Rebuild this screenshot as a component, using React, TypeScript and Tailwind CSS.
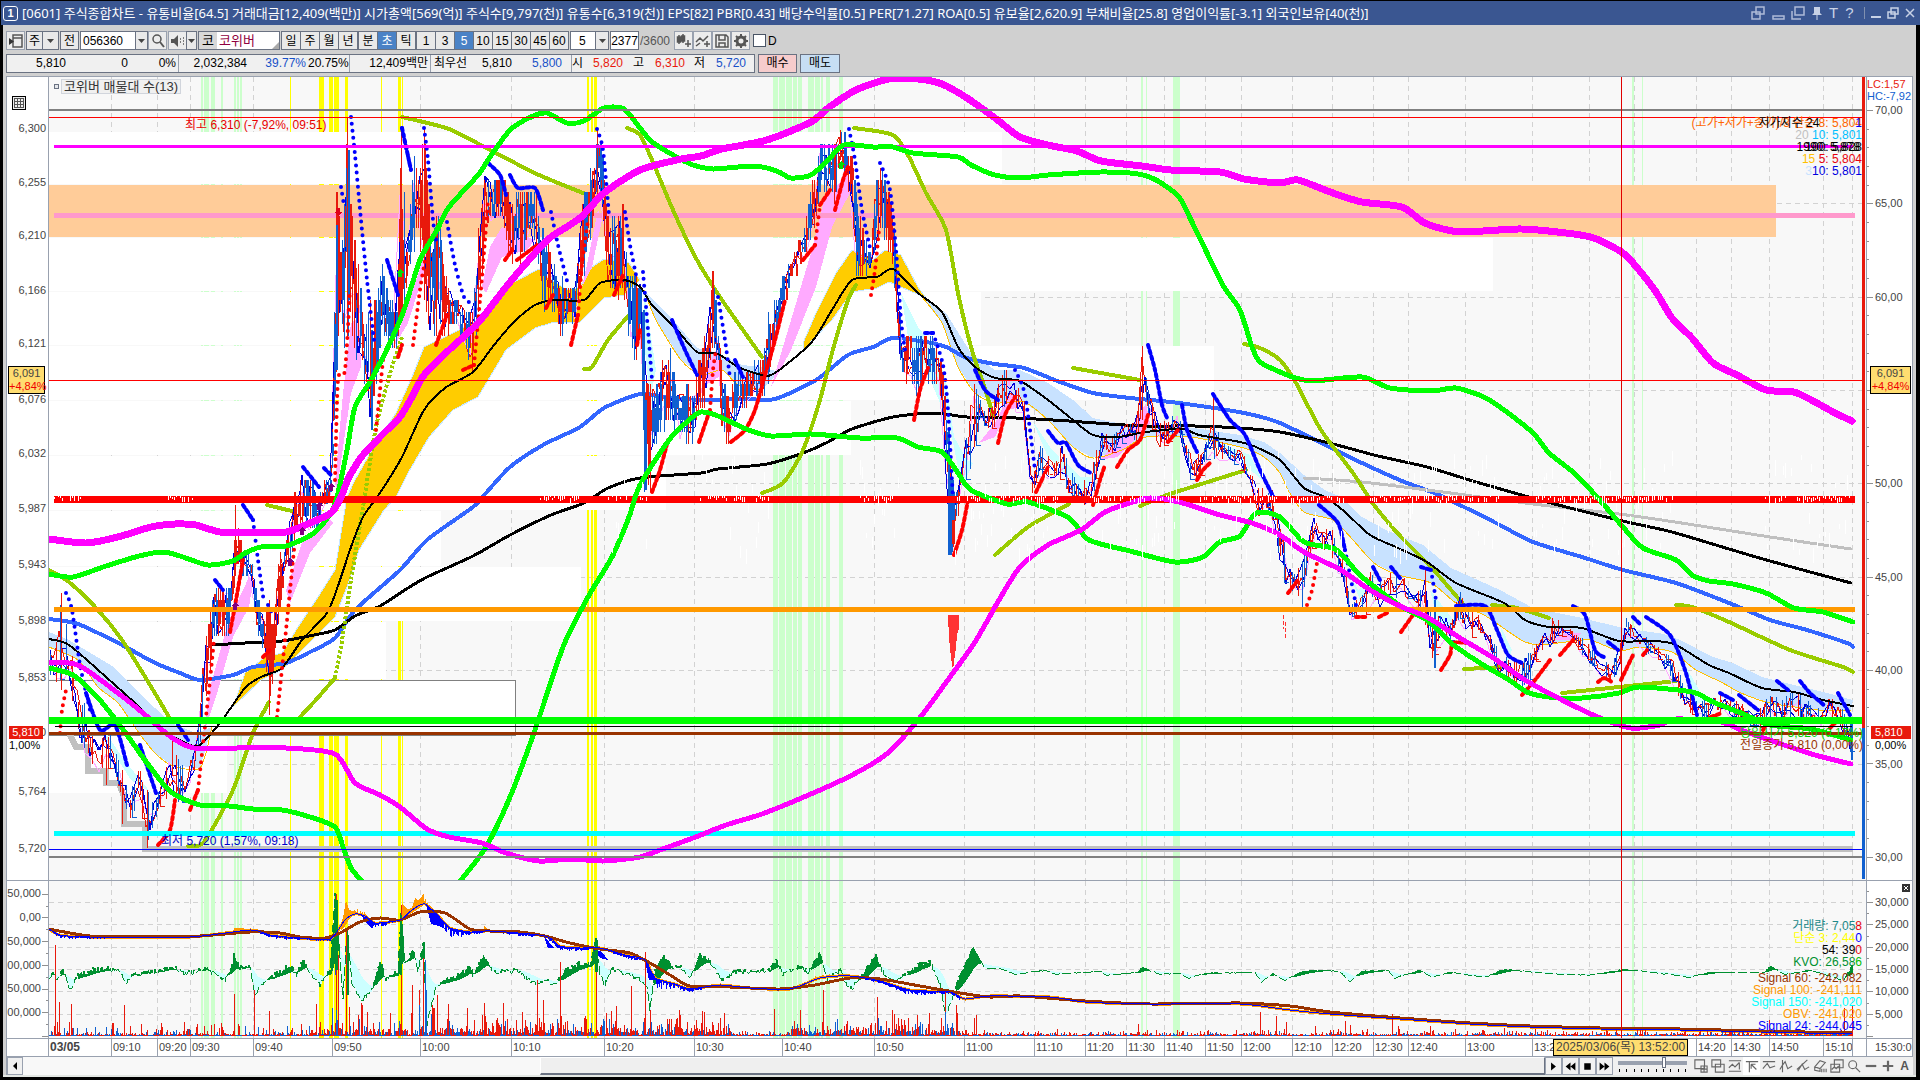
import React from "react";

type Pt = [number, number];

const X0 = 49;
const X1 = 1866;
const PLOT_W = X1 - X0;

/* ---------- helpers ---------- */

const parse = (s: string): Pt[] =>
  s
    .trim()
    .split(/\s+/)
    .map((p) => p.split(",").map(Number) as Pt);

const smooth = (s: string): string => {
  const p = parse(s);
  let d = `M${p[0][0]} ${p[0][1]}`;
  for (let i = 0; i < p.length - 1; i++) {
    const a = p[Math.max(0, i - 1)];
    const b = p[i];
    const c = p[i + 1];
    const e = p[Math.min(p.length - 1, i + 2)];
    const f = (n: number) => n.toFixed(1);
    d += `C${f(b[0] + (c[0] - a[0]) / 8)} ${f(b[1] + (c[1] - a[1]) / 8)} ${f(c[0] - (e[0] - b[0]) / 8)} ${f(c[1] - (e[1] - b[1]) / 8)} ${c[0]} ${c[1]}`;
  }
  return d;
};

const makeRandom = (seed: number) => () => {
  seed = (seed * 1664525 + 1013904223) % 4294967296;
  return seed / 4294967296;
};

const valueAt = (pts: number[][], x: number, k: number): number => {
  for (let i = 0; i < pts.length - 1; i++) {
    if (x <= pts[i + 1][0]) {
      const t = (x - pts[i][0]) / (pts[i + 1][0] - pts[i][0]);
      return pts[i][k] + (pts[i + 1][k] - pts[i][k]) * Math.max(0, t);
    }
  }
  return pts[pts.length - 1][k];
};

/* ---------- shared data ---------- */

const GRID_X = [111, 157, 190, 253, 332, 420, 511, 604, 694, 782, 874, 964, 1034, 1085, 1126, 1164, 1205, 1241, 1292, 1332, 1373, 1408, 1465, 1532, 1589, 1634, 1696, 1731, 1769, 1823, 1852];

const YELLOW: Pt[] = [[290, 1], [319, 5], [329, 4], [334, 5], [345, 3], [381, 1], [398, 3], [402, 1], [587, 2], [591, 2], [594, 3]];
const GREEN: Pt[] = [[201, 2], [204, 5], [211, 4], [221, 2], [234, 2], [237, 2], [240, 2], [773, 5], [779, 6], [786, 6], [793, 4], [798, 4], [808, 6], [815, 5], [821, 2], [826, 4], [839, 4], [1141, 2], [1146, 1], [1173, 7], [1632, 2], [1642, 1]];

const TIMES: [number, string][] = [
  [49, "03/05"], [111, "09:10"], [157, "09:20"], [190, "09:30"], [253, "09:40"], [332, "09:50"], [420, "10:00"], [511, "10:10"], [604, "10:20"], [694, "10:30"], [782, "10:40"], [874, "10:50"], [964, "11:00"], [1034, "11:10"], [1085, "11:20"], [1126, "11:30"], [1164, "11:40"], [1205, "11:50"], [1241, "12:00"], [1292, "12:10"], [1332, "12:20"], [1373, "12:30"], [1408, "12:40"], [1465, "13:00"], [1532, "13:20"], [1696, "14:20"], [1731, "14:30"], [1769, "14:50"], [1823, "15:10"], [1852, ""],
];

/* x, high, low of the traded price along the session */
const RANGE: number[][] = parse3(
  "49,645,682 57,640,690 61,593,690 69,630,680 78,690,745 88,710,760 98,745,772 106,720,770 114,745,770 122,770,800 130,790,822 139,765,800 147,790,848 155,800,818 163,775,808 171,735,790 180,765,810 190,760,780 196,735,775 200,690,750 206,632,700 212,590,650 220,582,643 228,582,635 233,575,600 235,505,570 241,545,568 249,555,570 258,590,640 265,610,660 269,600,700 273,625,690 278,560,630 285,545,570 290,505,565 297,488,530 302,467,530 310,480,530 318,490,530 325,480,500 331,468,500 333,380,440 336,187,372 340,225,330 345,190,370 347,117,340 350,200,330 355,240,360 363,310,370 370,300,430 376,300,395 382,260,335 388,300,345 396,310,345 401,130,330 407,240,280 413,150,260 418,170,235 424,130,300 430,240,345 437,210,340 445,260,340 453,300,320 461,300,330 467,310,360 472,310,370 478,215,320 482,190,280 485,165,240 490,175,225 500,175,225 510,190,260 520,190,260 530,190,250 536,190,260 543,235,310 550,240,310 555,270,310 561,280,345 567,285,320 575,285,320 580,220,300 586,180,260 592,165,230 597,129,190 602,155,210 608,200,290 615,210,300 622,205,290 628,275,340 634,270,365 640,270,340 644,310,490 650,380,490 656,375,440 664,360,430 670,345,420 677,380,440 685,385,440 693,390,440 699,350,415 706,330,400 713,260,350 718,320,380 722,370,440 728,400,442 736,370,430 744,375,410 752,365,395 762,360,395 768,310,395 775,300,340 782,280,310 788,262,285 795,250,270 802,225,260 808,200,260 814,170,240 820,140,200 828,140,190 834,140,205 840,130,155 846,140,190 852,160,200 857,200,290 863,235,270 870,250,275 876,180,250 881,160,225 887,190,250 892,200,260 897,270,330 902,340,380 910,340,380 917,340,400 925,330,380 932,330,390 938,355,380 943,370,410 948,430,555 953,480,555 958,480,520 963,460,500 968,400,480 972,375,470 980,400,420 987,410,430 993,395,430 1003,370,410 1010,370,400 1018,385,415 1024,400,430 1032,480,495 1040,445,470 1048,455,490 1056,460,480 1062,440,480 1070,470,500 1080,485,505 1090,470,505 1097,440,480 1102,430,450 1110,435,455 1118,430,450 1124,420,440 1137,420,440 1142,346,420 1147,385,410 1153,400,440 1160,420,450 1170,420,440 1178,405,430 1184,440,455 1190,450,480 1200,455,475 1205,445,460 1213,410,460 1220,440,460 1230,445,460 1240,445,470 1250,470,480 1258,480,520 1264,490,518 1273,490,520 1282,520,580 1286,560,593 1295,570,590 1302,560,610 1308,540,560 1315,505,540 1322,530,550 1330,525,555 1338,545,575 1345,565,590 1350,600,618 1358,600,618 1365,590,618 1370,570,600 1380,580,610 1390,570,595 1400,570,600 1410,590,600 1420,590,610 1425,570,630 1432,620,660 1440,610,640 1450,620,640 1460,590,620 1470,610,640 1478,615,630 1490,630,650 1500,650,680 1510,660,680 1520,660,690 1530,650,680 1540,640,650 1550,615,650 1558,620,640 1565,625,635 1575,632,645 1585,640,660 1595,650,670 1603,660,680 1612,660,682 1620,640,670 1626,617,640 1635,625,640 1645,635,655 1655,645,655 1665,650,670 1675,660,690 1685,690,710 1695,700,716 1705,700,718 1715,695,715 1725,695,710 1735,700,725 1745,705,720 1755,715,730 1765,700,725 1772,693,715 1780,700,730 1790,690,720 1800,690,725 1810,700,730 1820,710,725 1830,695,715 1840,705,730 1848,720,745 1852,725,760"
);

function parse3(s: string): number[][] {
  return s.split(" ").map((p) => p.split(",").map(Number));
}

/* ---------- price curves ---------- */

const MAGENTA_HIGH = "49,539 86,543 118,537 151,527 175,524 196,525 220,532 253,532 286,532 310,523 331,513 341,497 349,477 363,455 384,433 400,417 412,397 424,375 449,350 478,323 506,287 535,253 551,237 580,218 604,193 640,170 681,159 701,156 722,149 767,140 811,122 828,108 856,90 889,79 918,79 942,84 967,98 995,118 1020,137 1048,145 1077,151 1101,161 1142,166 1171,170 1220,172 1244,179 1280,183 1298,180 1333,193 1362,202 1402,207 1423,222 1443,229 1464,232 1521,229 1566,233 1594,238 1623,253 1639,270 1656,292 1672,318 1692,338 1713,363 1737,375 1766,390 1794,392 1815,402 1835,413 1852,421";
const MAGENTA_LOW = "49,662 78,665 114,690 143,713 171,737 194,748 237,748 286,748 335,754 355,783 380,795 400,807 427,829 449,837 482,843 506,853 539,861 571,859 604,861 640,857 660,850 693,838 726,825 762,814 811,794 856,773 889,752 922,715 950,677 975,642 999,600 1020,567 1048,545 1081,530 1105,512 1130,503 1150,498 1179,502 1220,515 1252,523 1280,535 1304,552 1341,570 1370,590 1402,607 1427,617 1460,638 1492,657 1525,680 1566,702 1598,717 1631,728 1660,725 1676,719 1721,722 1741,730 1778,743 1815,755 1851,764";
const GREEN_HIGH = "49,574 73,577 106,566 139,556 163,552 180,556 208,565 233,561 245,553 261,547 286,546 314,533 331,513 337,497 347,450 355,407 371,380 388,347 404,310 420,260 437,230 449,207 478,175 490,157 510,130 531,117 547,113 567,123 584,121 604,108 624,109 640,128 652,142 673,155 693,165 713,169 738,167 762,167 779,172 791,178 811,175 828,160 844,145 873,147 893,147 913,153 958,157 971,165 995,175 1020,178 1048,175 1101,172 1138,174 1158,181 1179,197 1191,220 1207,253 1224,287 1240,310 1252,347 1260,362 1280,372 1296,378 1313,381 1362,377 1390,388 1431,391 1456,388 1484,397 1504,410 1533,433 1549,453 1574,473 1598,498 1623,527 1643,548 1676,560 1692,575 1709,581 1733,584 1766,593 1794,608 1823,612 1853,622";
const GREEN_LOW_A = "49,668 73,675 98,698 122,728 147,763 171,792 200,805 229,806 253,809 282,810 310,817 335,827 343,847 351,868 361,880";
const GREEN_LOW_B = "461,880 486,847 510,797 535,730 563,647 588,597 612,557 629,517 640,485 669,440 689,420 701,412 718,416 746,429 771,436 811,434 860,438 897,438 918,447 942,452 958,473 971,490 1007,504 1028,502 1069,518 1089,540 1130,551 1175,562 1203,557 1220,542 1240,536 1256,513 1280,517 1304,542 1333,548 1345,558 1362,577 1402,607 1427,620 1451,643 1480,663 1509,680 1529,693 1558,698 1582,698 1619,693 1639,687 1692,692 1713,702 1741,713 1770,725 1811,729 1851,740";
const BLUE_LINE = "49,619 78,624 122,645 155,663 180,673 200,680 233,675 253,667 286,663 310,652 335,638 355,610 400,570 427,540 473,507 486,493 510,467 543,445 580,427 604,408 640,394 664,397 701,400 746,399 775,399 816,380 848,355 873,347 893,338 926,342 946,347 967,358 995,364 1024,368 1060,382 1093,393 1130,398 1179,403 1244,413 1280,423 1329,447 1362,463 1402,481 1439,495 1496,523 1533,542 1582,557 1623,570 1676,583 1729,603 1770,620 1807,630 1847,643 1853,647";
const BLACK_LONG = "212,645 245,643 282,641 314,635 335,630 355,616 380,606 408,588 427,577 473,556 510,535 551,515 584,503 608,488 640,478 701,473 718,469 767,464 803,453 828,442 852,429 893,417 934,413 967,417 1016,418 1069,421 1109,424 1146,426 1195,426 1240,428 1280,432 1329,443 1378,456 1427,467 1476,482 1525,496 1574,509 1627,522 1672,532 1729,549 1770,561 1851,583";
const BLACK_SHORT = "49,639 69,645 106,677 135,703 163,730 180,740 198,746 220,723 245,688 261,677 282,668 302,640 327,613 339,583 351,547 363,517 380,493 402,457 424,410 445,388 473,372 494,345 514,322 535,305 555,300 584,300 600,283 624,280 640,287 652,305 677,330 697,352 718,354 738,367 762,375 775,373 811,343 832,310 852,280 877,277 893,269 918,293 942,312 958,347 975,367 995,378 1020,381 1048,400 1073,420 1093,435 1118,437 1146,432 1183,429 1199,435 1240,442 1256,447 1280,460 1304,488 1325,497 1345,512 1370,535 1398,548 1427,562 1456,583 1504,603 1525,620 1549,627 1582,628 1619,641 1656,641 1676,645 1709,665 1729,673 1762,688 1794,692 1823,700 1853,706";
const GRAY_LINE = "1304,478 1362,482 1443,492 1533,504 1619,514 1688,524 1770,537 1851,549";

const OLIVE = [
  "49,570 69,582 98,610 122,640 147,680 169,717",
  "188,846 204,842 233,790 253,733 269,702",
  "267,505 292,511",
  "300,717 314,702 335,678",
  "402,117 449,129 490,150 539,175 588,195",
  "584,369 592,367 608,340 629,315",
  "627,128 640,135 652,160 673,210 697,260 722,300 762,357",
  "762,493 783,483 803,450 820,400 832,353 848,300 856,285",
  "854,128 893,135 909,157 926,193 946,230 958,293 971,347 983,383 993,415",
  "1073,368 1140,380",
  "995,555 1028,527 1069,504",
  "1140,506 1167,495 1211,481 1246,470",
  "1244,344 1260,348 1280,360 1296,383 1321,430 1353,473 1374,505 1402,538 1431,567 1464,605",
  "1492,605 1517,608 1549,618",
  "1464,669 1504,667",
  "1562,693 1676,681",
  "1676,605 1692,607 1729,622 1790,650 1843,667 1853,672",
];
const OLIVE_DOTTED = "335,678 341,647 351,580 363,507 376,427 392,367 402,337";

const GOLD_AREAS = [
  "233,707 245,673 265,657 282,653 298,627 318,597 335,570 347,497 355,480 376,443 396,413 412,377 424,347 453,333 473,323 494,303 514,282 539,269 547,277 567,290 580,287 592,267 604,259 629,263 640,280 624,295 604,298 580,322 551,323 535,328 506,350 478,397 453,410 429,437 408,473 396,497 384,510 359,550 347,587 335,617 302,650 282,670 261,680",
  "803,343 816,313 836,273 852,250 873,260 885,250 901,255 918,287 926,298 901,287 889,282 877,288 852,292 832,320 803,350",
];
const BAND_LOW = "1851,710 1819,710 1770,703 1741,693 1721,682 1696,670 1672,652 1639,647 1619,651 1590,640 1566,642 1541,645 1525,642 1509,632 1484,615 1456,603 1431,583 1398,575 1374,563 1353,540 1333,520 1304,512 1288,490 1280,473 1264,457 1244,448 1191,437 1146,437 1122,450 1093,458 1073,447 1048,420 1024,402 995,403 975,393 958,367 942,323 922,297";
const BLUE_AREAS = [
  "49,632 69,640 114,667 139,693 171,723 196,733 212,727 200,768 171,765 155,753 139,733 118,703 98,687 78,660 49,647",
  "644,290 673,320 697,348 718,353 742,365 762,367 779,372 762,390 738,385 722,370 701,375 681,360 656,320",
  "922,297 946,313 971,353 995,370 1020,370 1048,383 1073,400 1093,418 1122,424 1150,425 1187,427 1240,435 1264,442 1280,453 1304,475 1325,490 1341,497 1362,517 1386,530 1423,545 1451,568 1500,590 1533,608 1582,618 1623,628 1664,634 1680,640 1713,657 1733,663 1762,677 1794,685 1827,693 1853,700 " + BAND_LOW,
];
const GOLD_THIN = [BAND_LOW, "49,647 78,660 98,687 118,703 139,733 155,753 171,765 200,768 212,727", "644,290 656,320 681,360 701,375 722,370 738,385 762,390"];
const PINK_AREAS = [
  "204,733 210,687 229,620 249,577 253,580 249,607 233,637 216,697",
  "286,590 302,543 327,517 333,523 310,553 290,603",
  "335,483 343,393 351,323 359,317 361,367 351,393 343,447 337,490",
  "392,350 412,293 429,240 427,263 408,323",
  "482,287 490,247 502,227 535,240 527,250 502,257 486,293",
  "582,287 588,260 598,210 602,220 592,267",
  "771,387 791,320 811,253 824,200 848,173 850,193 832,227 816,287 791,350 775,380",
  "979,443 995,423 1011,393 1022,407 1007,410 995,437",
  "1099,460 1130,430 1146,403 1150,423 1118,457",
  "1553,640 1566,632 1582,633 1574,640",
  "700,380 716,350 722,375 706,385",
];
const CYAN_AREAS = [
  "82,687 102,727 122,757 151,793 131,780 110,747",
  "644,290 650,330 656,370 650,400 645,350",
  "901,293 918,327 934,347 946,380 954,437 967,460 973,463 962,487 950,427 922,360 909,343",
  "1032,420 1052,450 1081,477 1093,477 1085,493 1048,457",
  "1345,563 1358,590 1372,578 1362,605",
  "1430,590 1455,622 1440,630",
  "1500,625 1512,650 1508,662",
  "1685,665 1705,700 1695,705",
  "1213,440 1250,455 1262,480 1245,465",
];

const BLUE_DOTS = [
  "351,117 355,155 361,220 367,280 374,340", "341,187 344,205", "402,128 411,170", "424,128 428,160 433,220 436,240", "447,222 455,265 464,297 471,303",
  "551,212 558,245 568,285", "597,129 603,150 609,215", "625,212 630,245 636,275", "643,272 648,330 652,380", "718,297 725,340 730,378",
  "849,129 855,160 862,210 870,248", "880,163 890,190 896,250 901,320 905,350", "933,333 943,365 948,410 953,500", "1015,370 1025,395 1035,470",
  "66,593 72,610 80,665 90,710", "253,520 258,560 264,603", "268,605 274,617", "1345,550 1356,605", "1431,570 1436,600",
];
const BLUE_DASHES = [
  "402,128 411,170", "387,260 398,295", "488,163 500,175 506,195", "510,175 518,188 535,188 543,210", "672,320 685,350 697,375", "735,360 743,377", "925,333 933,333",
  "975,370 985,390 998,400", "1048,431 1058,443 1066,443 1078,465 1091,473", "1148,345 1155,370 1162,405 1168,420", "1182,405 1187,430 1197,452", "1213,394 1230,420 1245,435 1260,470 1275,500",
  "1319,505 1338,523 1345,550", "1373,567 1380,580", "1391,567 1400,578", "1421,567 1431,570", "1456,606 1485,606 1497,630 1508,655 1522,663", "1573,606 1585,615 1595,650 1606,658",
  "1608,642 1618,650", "1633,617 1641,625", "1646,617 1670,635 1685,670 1697,715", "1720,693 1733,700", "1739,695 1758,710", "1777,681 1788,690", "1800,681 1810,693 1825,706", "1838,693 1850,715",
  "86,693 100,730 115,725 127,765", "140,745 156,793", "178,725 188,740", "215,580 223,590", "243,505 253,520", "303,467 319,487", "324,468 331,475",
];
const RED_DOTS = [
  "60,733 62,710 66,690", "198,790 204,735 210,680 214,640", "277,717 285,640 292,570 295,540", "335,480 338,380 345,370 350,290", "376,430 383,360", "413,345 420,290 425,260",
  "474,365 480,300 485,240 488,200", "578,315 582,265 588,220", "710,410 713,370 716,350", "871,295 875,270 879,230", "815,245 820,205", "1307,605 1312,590 1317,563",
];
const RED_DASHES = [
  "158,845 170,830 175,800", "190,810 198,790", "230,632 236,600 243,560", "263,657 270,650", "398,357 402,345", "436,345 447,315", "463,370 474,365", "505,260 512,250", "517,260 537,245",
  "546,308 553,295", "571,345 578,315", "614,295 623,275", "637,345 640,330", "652,492 660,470 668,440", "699,442 710,410", "731,442 745,430 755,410 765,375 775,340 785,300",
  "803,260 815,245", "820,205 830,190", "835,210 843,180 848,167", "914,420 920,390 928,368", "954,555 962,530 968,500", "998,443 1005,415 1015,397", "1036,492 1048,467",
  "1093,505 1100,480 1105,465", "1117,467 1128,450 1140,440 1148,415", "1168,442 1178,430", "1197,480 1203,470 1211,462", "1288,593 1298,580", "1356,617 1366,617", "1379,617 1387,613",
  "1401,632 1413,615", "1441,670 1450,655 1453,643 1468,643", "1522,695 1535,680 1550,660", "1560,655 1573,640", "1598,682 1604,678 1612,682", "1621,680 1633,655", "1643,655 1647,650",
  "1711,717 1722,713", "1763,730 1770,720", "1830,728 1838,720",
];

/* volume-by-price rows: top, bottom, right end */
const PROFILE: [number, number, number][] = [
  [132, 184, 1002], [238, 291, 1493], [292, 345, 981], [346, 400, 1214], [401, 455, 851], [456, 510, 666], [511, 566, 441], [567, 621, 581], [622, 679, 386], [680, 735, 515], [736, 793, 227],
];

const Grid = ({ top, bottom, rows }: { top: number; bottom: number; rows: number[] }) => (
  <g>
    <g stroke="#d2d2d2" strokeDasharray="5 4">
      {rows.map((y) => (
        <line key={y} x1={X0} x2={1862} y1={y + 0.5} y2={y + 0.5} />
      ))}
      {GRID_X.map((x) => (
        <line key={x} x1={x + 0.5} x2={x + 0.5} y1={top} y2={bottom} />
      ))}
    </g>
    {YELLOW.map(([x, w]) => (
      <rect key={x} x={x} y={top} width={w} height={bottom - top} fill="#ffff00" />
    ))}
    {GREEN.map(([x, w]) => (
      <rect key={x} x={x} y={top} width={w} height={bottom - top} fill="#ccffcc" />
    ))}
  </g>
);

/* one price tick on the vertical scale */
const TICK = 12;
const snap = (y: number) => Math.round(y / TICK) * TICK;

const Candles = () => {
  const rnd = makeRandom(77);
  let red = "";
  let blue = "";
  let redThin = "";
  let blueThin = "";
  let up = true;
  for (let x = 50; x < 1853; x += 2) {
    const hi = valueAt(RANGE, x, 1);
    const lo = valueAt(RANGE, x, 2);
    const span = lo - hi;
    if (rnd() < 0.35) up = !up;
    const dense = x > 205 && x < 960;
    const len = span * (0.4 + rnd() * 0.6);
    const start = hi + (span - len) * rnd();
    if (dense) {
      const top = snap(start);
      const bottom = Math.max(top + TICK, snap(start + len));
      const seg = `M${x + 0.5} ${top}V${bottom}`;
      const bTop = top + Math.floor(rnd() * 2) * TICK;
      const bBottom = Math.max(bTop + TICK, snap(bTop + (bottom - bTop) * 0.7));
      const b = `M${x + 1} ${bTop}V${bBottom}`;
      if (up) {
        red += rnd() < 0.7 ? b : "";
        redThin += seg;
      } else {
        blue += rnd() < 0.7 ? b : "";
        blueThin += seg;
      }
    } else if (rnd() < 0.55) {
      const seg = `M${x + 0.5} ${start.toFixed(0)}V${(start + len).toFixed(0)}`;
      if (up) redThin += seg + (rnd() < 0.3 ? "h4" : "");
      else blueThin += seg + (rnd() < 0.3 ? "h4" : "");
    }
  }
  const path = (offset: number, step: number) => {
    let d = "";
    for (let x = 50; x < 1853; x += step) {
      const hi = valueAt(RANGE, x, 1);
      const lo = valueAt(RANGE, x, 2);
      const y = hi + (lo - hi) * (0.1 + 0.8 * rnd()) + offset;
      d += `${d ? "L" : "M"}${x} ${y.toFixed(0)}`;
    }
    return d;
  };
  return (
    <g fill="none">
      <path d={path(6, 7)} stroke="#ffaaff" />
      <path d={path(0, 4)} stroke="#0000d8" />
      <path d={path(0, 3)} stroke="#e8190c" />
      <path d={path(2, 5)} stroke="#0000d8" />
      <path d={blueThin} stroke="#1060d0" />
      <path d={redThin} stroke="#e8190c" />
      <path d={blue} stroke="#1060d0" strokeWidth={2} />
      <path d={red} stroke="#e8190c" strokeWidth={2} />
      <path d="M347.500 117V340M401.500 128V310M424.500 128V290M597.500 128V200M840.500 130V160M1142.500 350V420M61.500 593V690M269.500 600V715M235.500 505V570M1213.500 394V450M1425.500 570V625" stroke="#e8190c" />
      <path d="M348.500 150V300M336.500 225V370M643.500 310V430M645.500 400V490M948.500 430V555M950.500 480V555M371.500 330V430M1434.500 600V668M1851.500 720V760" stroke="#1060d0" strokeWidth={2} />
      <rect x={952} y={520} width={3} height={24} fill="#e8190c" />
      <path d="M147.500 790V848M106.500 745V785M122.500 770V824" stroke="#e8190c" />
    </g>
  );
};

const WhiteNoise = () => {
  const rnd = makeRandom(5);
  const onLine: string[] = [];
  const below: string[] = [];
  const clusters: Pt[] = [[54, 82], [168, 196], [540, 580], [608, 628], [640, 650], [700, 770], [860, 900], [955, 1060], [1090, 1180], [1200, 1280], [1285, 1345], [1370, 1500], [1530, 1675], [1765, 1850]];
  clusters.forEach(([a, b]) => {
    for (let x = a; x < b; x += 2) {
      if (rnd() < 0.6) {
        const y = 495 + Math.floor(rnd() * 4);
        onLine.push(`M${x + 0.5} ${y}v${2 + Math.floor(rnd() * 4)}`);
      }
      if (rnd() < 0.55 && a > 600) {
        const y = 450 + rnd() * 100;
        below.push(`M${x + 0.5} ${y.toFixed(0)}v${(4 + rnd() * 12).toFixed(0)}`);
      }
    }
  });
  return <path d={onLine.join("") + below.join("")} stroke="#ffffff" fill="none" />;
};

const Arrow = ({ x, y, color, down }: { x: number; y: number; color: string; down?: boolean }) => {
  const s = down ? -1 : 1;
  return <path d={`M${x} ${y - 4 * s}l4 ${4 * s}h-2v${4 * s}h-4v${-4 * s}h-2z`} fill={color} />;
};

const Curve = ({ d, color, w }: { d: string; color: string; w: number }) => (
  <path d={smooth(d)} stroke={color} strokeWidth={w} fill="none" strokeLinecap="round" strokeLinejoin="round" />
);

const PriceChart = () => (
  <svg viewBox={`${X0} 77 ${PLOT_W} 803`} preserveAspectRatio="none" shapeRendering="crispEdges" className="block h-[803px] w-full bg-[#f8f8f8]" role="img" aria-label="가격 차트">
    <Grid top={77} bottom={880} rows={[203, 297, 390, 483, 577, 670, 764]} />
    {PROFILE.map(([t, b, r]) => (
      <rect key={t} x={X0} y={t} width={r - X0} height={b - t} fill="#ffffff" />
    ))}
    <rect x={X0 - 1} y={680.5} width={467} height={55} fill="none" stroke="#808080" />
    <rect x={X0} y={185} width={1727} height={52} fill="#ffcc99" />
    {BLUE_AREAS.map((d) => <polygon key={d} points={d} fill="#c8e2ff" />)}
    {CYAN_AREAS.map((d) => <polygon key={d} points={d} fill="#ccffff" />)}
    {GOLD_AREAS.map((d) => <polygon key={d} points={d} fill="#ffcc00" stroke="#c8e8ff" />)}
    {PINK_AREAS.map((d) => <polygon key={d} points={d} fill="#ffaaff" />)}
    {GOLD_THIN.map((d) => <path key={d} d={smooth(d)} fill="none" stroke="#ffc000" />)}
    <path d="M69 733L76 747H88V771H106V783H119L124 797V824H145V849H1853" fill="none" stroke="#c0c0c0" strokeWidth={6} />
    <path d="M54 215H1855" stroke="#ff99cc" strokeWidth={5} />
    <Curve d={BLUE_LINE} color="#3366ff" w={4} />
    <Curve d={GRAY_LINE} color="#c0c0c0" w={3} />
    <Curve d={BLACK_LONG} color="#000000" w={3} />
    {OLIVE.map((d) => <Curve key={d} d={d} color="#99cc00" w={4} />)}
    <path d={smooth(OLIVE_DOTTED)} fill="none" stroke="#99cc00" strokeWidth={4} strokeDasharray="3 2" />
    <Candles />
    <Curve d={BLACK_SHORT} color="#000000" w={2} />
    <g shapeRendering="auto" fill="none" strokeLinecap="round" strokeWidth={4}>
      {BLUE_DOTS.map((d) => <path key={d} d={smooth(d)} stroke="#0000ff" strokeDasharray="0 7" />)}
      {RED_DOTS.map((d) => <path key={d} d={smooth(d)} stroke="#ff0000" strokeDasharray="0 7" />)}
      {BLUE_DASHES.map((d) => <path key={d} d={smooth(d)} stroke="#0000ff" strokeDasharray="3 3" />)}
      {RED_DASHES.map((d) => <path key={d} d={smooth(d)} stroke="#ff0000" strokeDasharray="3 3" />)}
    </g>
    <path d="M54 146.5H1853" stroke="#ff00ff" strokeWidth={3} />
    <path d="M54 499.500H1855" stroke="#ff0000" strokeWidth={7} />
    <path d="M54 609.500H1855" stroke="#ff9900" strokeWidth={5} />
    <path d="M54 833.500H1855" stroke="#00ffff" strokeWidth={5} />
    <Curve d={GREEN_HIGH} color="#00ff00" w={5} />
    <Curve d={GREEN_LOW_A} color="#00ff00" w={5} />
    <Curve d={GREEN_LOW_B} color="#00ff00" w={5} />
    <Curve d={MAGENTA_HIGH} color="#ff00ff" w={7} />
    <Curve d={MAGENTA_LOW} color="#ff00ff" w={5} />
    <WhiteNoise />
    <path d="M948 615h11v14l-2 6l-1 12l-3 23l-2-12l-2-20z" fill="#ff3333" />
    <path d="M1283.500 615v14M1285.500 622v18" stroke="#ff3333" strokeDasharray="4 2" />
    <Arrow x={338} y={212} color="#e0001a" down />
    <Arrow x={400} y={273} color="#00e000" />
    <Arrow x={841} y={165} color="#00e000" />
    {[[331, 487], [319, 506], [302, 531], [290, 562], [235, 606]].map(([x, y]) => (
      <Arrow key={x} x={x} y={y} color="#800080" />
    ))}
    <rect x={X0} y={717} width={1813} height={7} fill="#00ff00" />
    <rect x={55} y={726} width={1797} height={1} fill="#000000" />
    <rect x={X0} y={732} width={1813} height={3} fill="#993300" />
    <rect x={X0} y={849} width={1813} height={1} fill="#0000ff" />
    <rect x={X0} y={856} width={1813} height={2} fill="#808080" />
    <rect x={X0} y={109} width={1813} height={2} fill="#808080" />
    <rect x={X0} y={117} width={1813} height={1} fill="#ff0000" />
    <rect x={X0} y={380} width={1813} height={1} fill="#ff0000" />
    <rect x={1621} y={77} width={1} height={803} fill="#e00000" />
    <rect x={1862} y={77} width={3} height={651} fill="#e8190c" />
    <rect x={1862} y={728} width={3} height={151} fill="#1060d0" />
  </svg>
);

/* ---------- lower indicator pane ---------- */

const BROWN = "49,929 90,936 150,937 200,936 250,932 280,933 300,937 325,938 340,933 360,922 380,918 400,920 420,912 445,913 470,929 490,931 520,932 545,936 570,943 600,949 630,953 650,963 670,975 690,986 730,987 780,989 815,985 850,978 880,979 920,986 960,993 990,997 1020,996 1085,1001 1150,1004 1240,1003 1290,1006 1330,1012 1400,1018 1470,1023 1530,1026 1600,1028 1680,1029 1760,1031 1852,1033";
const SIGNAL = "49,929 60,935 90,937 190,937 250,930 270,935 300,938 330,939 345,920 355,914 365,916 375,923 400,920 412,910 425,904 440,918 450,928 470,932 490,931 545,936 560,946 580,948 600,948 625,955 645,960 655,978 675,984 690,989 720,985 750,988 790,989 820,978 850,976 880,981 910,990 950,992 965,999 990,996 1050,997 1085,1002 1150,1004 1240,1004 1290,1010 1330,1014 1400,1019 1470,1024 1530,1027 1600,1029 1680,1030 1760,1032 1852,1034";
const KVO: number[][] = parse("49,978 54,972 57,980 62,968 70,990 78,975 90,970 110,968 120,972 126,985 132,974 145,973 175,967 185,974 205,968 215,975 225,980 230,970 234,955 240,968 250,965 255,995 265,980 280,972 290,965 297,975 303,958 310,973 320,985 330,970 335,895 338,930 343,1000 347,930 352,985 362,1000 372,990 380,960 386,980 398,970 401,910 405,965 413,950 418,970 424,940 426,1030 435,990 445,980 460,975 470,965 473,975 483,957 495,972 515,970 530,980 537,985 545,980 555,985 565,970 580,963 590,965 596,940 600,975 605,985 612,968 630,975 640,980 647,985 650,1010 655,970 664,956 672,968 680,965 690,978 700,955 710,962 722,980 735,972 770,970 776,960 783,975 800,965 808,972 820,953 828,980 840,970 850,990 862,975 876,955 884,975 895,980 905,975 918,965 930,962 940,985 946,1015 955,990 960,975 973,947 980,960 985,968 1000,968 1015,974 1045,970 1055,974 1100,971 1106,975 1138,972 1142,967 1160,974 1180,973 1188,978 1205,973 1255,972 1261,982 1273,973 1285,980 1300,972 1315,970 1340,971 1350,982 1362,971 1388,970 1394,978 1420,970 1432,977 1450,972 1485,977 1504,969 1545,973 1590,975 1624,969 1670,974 1690,977 1710,972 1765,972 1770,966 1785,974 1810,970 1844,980 1852,965");

const SPIKES: Pt[] = [[55, 945], [59, 1002], [71, 1004], [124, 1005], [234, 994], [254, 990], [269, 1011], [316, 1004], [336, 894], [338, 955], [346, 930], [362, 1005], [367, 1012], [401, 905], [412, 985], [419, 990], [423, 958], [437, 995], [448, 1004], [467, 1008], [484, 1003], [503, 1003], [537, 980], [543, 1000], [560, 962], [596, 950], [616, 1006], [631, 986], [645, 952], [650, 1010], [679, 1010], [724, 1013], [774, 1009], [800, 1010], [823, 990], [877, 997], [892, 1010], [945, 990], [956, 1005], [974, 1018], [976, 1015], [1138, 1024], [1260, 1012], [1276, 1016], [1286, 1022], [1315, 1026], [1345, 1021], [1350, 1025], [1392, 1014], [1398, 1026], [1430, 1026], [1504, 1028], [1769, 1020], [1844, 1008], [1852, 1005]];

const SubChart = () => {
  const rnd = makeRandom(31);
  let red = "";
  let blue = "";
  for (let x = 50; x < 1853; x += 1) {
    const active = x > 330 && x < 730;
    const late = x > 790 && x < 960;
    const busy = x > 330 && x < 440 ? 24 : active || late ? 16 : x < 330 ? 10 : 4;
    const h = 1 + Math.pow(rnd(), 4) * busy * 1.3 + (active || late ? rnd() * 7 : rnd());
    if (rnd() < 0.6) red += `M${x + 0.5} 1036v${-h.toFixed(0)}`;
    else blue += `M${x + 0.5} 1036v${-(h * 0.7).toFixed(0)}`;
  }
  let up = "";
  let down = "";
  let orange = "";
  let blueFill = "";
  let line = "";
  const brown = parse(BROWN);
  const sig = parse(SIGNAL);
  let avg = 975;
  for (let x = 49; x <= 1852; x++) {
    const y = valueAt(KVO, x, 1) + (x < 960 ? (rnd() - 0.5) * 5 : (rnd() - 0.5) * 1);
    avg += (y - avg) * 0.07;
    if (y < avg) up += `M${x + 0.5} ${y.toFixed(0)}V${avg.toFixed(0)}`;
    else down += `M${x + 0.5} ${avg.toFixed(0)}V${y.toFixed(0)}`;
    line += `${line ? "L" : "M"}${x} ${y.toFixed(0)}`;
    const s = valueAt(sig, x, 1);
    const b = valueAt(brown, x, 1);
    if (s < b - 1) orange += `M${x + 0.5} ${(s - rnd() * (b - s) * 0.7).toFixed(0)}V${s.toFixed(0)}`;
    else if (x < 960) blueFill += `M${x + 0.5} ${s.toFixed(0)}v${((s - b) * 0.8 * rnd() + 1).toFixed(0)}`;
  }
  return (
    <svg viewBox={`${X0} 881 ${PLOT_W} 157`} preserveAspectRatio="none" shapeRendering="crispEdges" className="block h-[157px] w-full bg-[#f8f8f8]" role="img" aria-label="거래량 및 보조지표">
      <Grid top={881} bottom={1038} rows={[902, 924, 947, 969, 991, 1014]} />
      <path d={down} stroke="#ccffff" />
      <path d={up} stroke="#009030" />
      <path d={line} stroke="#009030" fill="none" strokeDasharray="9 3" />
      <path d={smooth(SIGNAL)} stroke="#ff9900" strokeWidth={3} fill="none" />
      <path d={orange} stroke="#ff9900" />
      <path d="M341 930L344 912L346 900L349 910L356 912L350 918L345 926zM400 922L402 903L407 909L412 908L415 898L418 901L422 896L424 893V905L412 913L404 920zM234 931v-3h10v3zM484 931v-5l3 3 8 2z" fill="#ff9900" />
      <path d="M426 904l5 20l8 2l6 3l-6-14zM645 960l4 20l8 0zM361 915l6 3l8 6l-3 5l-4-4zM592 948l10 4l6 8l-8 -2zM544 936l4 12h6z" fill="#0000ff" />
      <path d={blueFill} stroke="#0000ff" />
      <path d={red} stroke="#e8190c" />
      <path d={blue} stroke="#1060d0" />
      <path d={SPIKES.map(([x, y]) => `M${x + 0.5} 1036V${y}`).join("")} stroke="#e8190c" />
      <path d="M335.500 975V900M336.500 1036V1010M425.500 1036V960M419.500 1036V1005M332.500 1036V1008M945.500 1036V1012M426.500 1036V990" stroke="#1060d0" />
      <path d="M335 900h3v70h-3zM400 915h2v60h-2zM347 935h2v60h-2zM595 940h3v32h-3z" fill="#009030" />
      <path d={smooth(BROWN)} stroke="#993300" strokeWidth={3} fill="none" />
      <path d={smooth(SIGNAL)} stroke="#0000ff" fill="none" />
      <path d="M49 1035.500H1852" stroke="#1060d0" strokeDasharray="6 5" />
      <path d="M55 1035.500H1852" stroke="#e8190c" strokeDasharray="5 6" />
      <rect x={1621} y={881} width={1} height={157} fill="#e00000" />
    </svg>
  );
};

/* ---------- axes ---------- */

const PRICES: [number, string][] = [[128, "6,300"], [182, "6,255"], [235, "6,210"], [290, "6,166"], [343, "6,121"], [399, "6,076"], [453, "6,032"], [508, "5,987"], [564, "5,943"], [620, "5,898"], [677, "5,853"], [732, "5,810"], [791, "5,764"], [848, "5,720"]];
const SCALE: [number, string][] = [[110, "70,00"], [203, "65,00"], [297, "60,00"], [483, "50,00"], [577, "45,00"], [670, "40,00"], [764, "35,00"], [857, "30,00"]];

const Label = ({ y, top, right, children }: { y: number; top: number; right?: boolean; children: React.ReactNode }) => (
  <span className={right ? "absolute left-2 -translate-y-1/2" : "absolute right-0.5 -translate-y-1/2"} style={{ top: y - top }}>
    {children}
  </span>
);

const LeftAxis = () => (
  <div className="relative h-[803px] w-[42px] shrink-0 overflow-hidden border-r border-gray-400 bg-white text-[#444]">
    <button aria-label="표 보기" className="absolute left-[5px] top-[19px] flex size-[14px] items-center justify-center border border-black bg-[#eee]">
      <svg viewBox="0 0 10 10" className="size-[10px]" shapeRendering="crispEdges" fill="none" stroke="#555"><path d="M.5 .5h9v9h-9zM.5 3.500h9M.5 6.500h9M3.500 .5v9M6.500 .5v9" /></svg>
    </button>
    {PRICES.map(([y, t]) => <Label key={t} y={y} top={77}>{t}</Label>)}
    <div className="absolute left-px top-[289px] w-[37px] border border-black bg-[#ffdd70] text-center leading-[13px]">
      6,091
      <br />
      <span className="text-[#f00000]">+4,84%</span>
    </div>
    <div className="absolute left-0.5 top-[649px] w-[34px] bg-[#e8190c] text-center leading-[13px] text-white">5,810</div>
    <div className="absolute left-0.5 top-[662px] bg-white leading-[13px] text-black">1,00%</div>
  </div>
);

const RightAxis = () => (
  <div className="relative h-[803px] w-[47px] shrink-0 overflow-hidden border-l border-r border-gray-400 bg-white text-[#444]">
    <svg viewBox="0 77 6 803" className="absolute left-0 top-0 h-[803px] w-[6px]" shapeRendering="crispEdges" stroke="#909090">
      {Array.from({ length: 41 }, (_, i) => (
        <line key={i} x1={0} x2={i % 5 === 0 ? 6 : 2} y1={110.5 + i * 18.67} y2={110.5 + i * 18.67} />
      ))}
    </svg>
    <div className="absolute left-0 top-px leading-[12px]">
      <div className="text-[#e8190c]">LC:1,57</div>
      <div className="text-[#1060d0]">HC:-7,92</div>
    </div>
    {SCALE.map(([y, t]) => <Label key={t} y={y} top={77} right>{t}</Label>)}
    <div className="absolute left-[3px] top-[289px] w-[41px] border border-black bg-[#ffdd70] text-center leading-[13px]">
      6,091
      <br />
      <span className="text-[#f00000]">+4,84%</span>
    </div>
    <div className="absolute left-1 top-[649px] w-[40px] bg-[#e8190c] px-1 leading-[13px] text-white">5,810</div>
    <div className="absolute left-2 top-[662px] bg-white leading-[13px] text-black">0,00%</div>
  </div>
);

const LEFT_SUB: [number, string][] = [[893, "50,000"], [917, "0,00"], [941, "50,000"], [965, "00,000"], [988, "50,000"], [1012, "00,000"]];
const RIGHT_SUB: [number, string][] = [[902, "30,000"], [924, "25,000"], [947, "20,000"], [969, "15,000"], [991, "10,000"], [1014, "5,000"]];

/* ---------- toolbar ---------- */

const Arrows = () => <svg viewBox="0 0 7 4" className="h-1 w-[7px]" fill="#444"><path d="M0 0h7l-3.500 4z" /></svg>;

const BTN = "flex h-[19px] items-center justify-center border border-gray-500 bg-[#e9e9e9] text-black";

const Segment = ({ items, active }: { items: string[]; active?: string }) => (
  <div className="flex border-l border-gray-500">
    {items.map((t) => (
      <button key={t} className={t === active ? "h-[19px] w-[19px] border-y border-r border-gray-500 bg-[#4a82c6] text-white" : "h-[19px] w-[19px] border-y border-r border-gray-500 bg-[#e9e9e9] text-black"}>
        {t}
      </button>
    ))}
  </div>
);

const ToolIcon = ({ label, children }: { label: string; children: React.ReactNode }) => (
  <button aria-label={label} className="flex h-[19px] w-[19px] items-center justify-center border border-gray-400 bg-[#ececec]">
    <svg viewBox="0 0 16 16" className="size-4" fill="none" stroke="#555" strokeWidth={1.500}>{children}</svg>
  </button>
);

const Toolbar = () => (
  <div className="flex h-[19px] items-center gap-px pl-[3px] text-xs">
    <ToolIcon label="패널"><path d="M5 2h9v12H5zM5 5h9" /><path d="M1 5v7l5-3.500z" fill="#333" stroke="none" /></ToolIcon>
    <div className="flex">
      <button className={`${BTN} w-[17px]`}>주</button>
      <button aria-label="종류 선택" className={`${BTN} -ml-px w-[17px]`}><Arrows /></button>
    </div>
    <button className={`${BTN} w-[19px]`}>전</button>
    <div className="flex">
      <input aria-label="종목코드" defaultValue="056360" className="h-[19px] w-[56px] border border-gray-500 bg-white pl-0.5 outline-none" />
      <button aria-label="종목 목록" className={`${BTN} -ml-px w-[13px]`}><Arrows /></button>
      <ToolIcon label="검색"><circle cx="7" cy="6" r="4" /><path d="M10 9l4 5" strokeWidth={2} /></ToolIcon>
    </div>
    <div className="flex">
      <ToolIcon label="소리"><path d="M1 6h3l4-4v12l-4-4H1z" fill="#555" stroke="none" /><path d="M10 6h1M10 9h1M13 5h1M13 8h1M13 11h1" /></ToolIcon>
      <button aria-label="소리 설정" className={`${BTN} -ml-px w-[11px]`}><Arrows /></button>
    </div>
    <div className="relative flex h-[19px] w-[82px] items-center border border-gray-500 bg-white text-[13px]">
      <span className="flex h-full w-[18px] items-center justify-center bg-[#d8d8d8]">코</span>
      <span className="pl-0.5 text-[#900040]">코위버</span>
      <svg viewBox="0 0 7 7" className="absolute bottom-0 right-0 size-[7px]"><path d="M7 0v7H0z" fill="#aaa" /></svg>
    </div>
    <div className="flex">
      <Segment items={["일", "주", "월", "년"]} />
      <Segment items={["분", "초", "틱"]} active="초" />
      <Segment items={["1", "3", "5", "10", "15", "30", "45", "60"]} active="5" />
    </div>
    <div className="relative flex h-[19px] w-[39px] items-center">
      <select aria-label="간격" className="h-[19px] w-full appearance-none border border-gray-500 bg-white pl-2 outline-none"><option>5</option></select>
      <span className="pointer-events-none absolute right-0 flex h-full w-[14px] items-center justify-center border border-gray-500 bg-[#e9e9e9]"><Arrows /></span>
    </div>
    <input aria-label="봉 개수" defaultValue="2377" className="h-[19px] w-[29px] border border-gray-500 bg-white text-center outline-none" />
    <span className="w-[33px] text-[#555]">/3600</span>
    <div className="flex">
      <ToolIcon label="캔들 추가"><path d="M3 2v9M7 1v9M12 7v7M9 11h6" /><path d="M1.500 4h3v5h-3zM5.500 3h3v5h-3z" fill="#555" /></ToolIcon>
      <ToolIcon label="지표 추가"><path d="M1 9l4-4 3 3 5-5M1 13l4-3M12 8v6M9 11h6" /></ToolIcon>
      <ToolIcon label="저장"><path d="M2 2h10l2 2v10H2zM5 2v5h6V2M5 14v-4h6v4" /></ToolIcon>
      <ToolIcon label="설정"><circle cx="8" cy="8" r="4" strokeWidth={3} /><path d="M8 1v3M8 12v3M1 8h3M12 8h3M3 3l2 2M11 11l2 2M13 3l-2 2M3 13l2-2" strokeWidth={2} /></ToolIcon>
    </div>
    <label className="ml-0.5 flex items-center gap-0.5">
      <input type="checkbox" className="size-[13px] appearance-none border border-gray-600 bg-white" />D
    </label>
  </div>
);

const Cell = ({ w, color, align = "text-right", line, children }: { w: string; color?: string; align?: string; line?: boolean; children: React.ReactNode }) => (
  <span className={`${w} ${color ?? ""} ${align} ${line ? "border-r border-gray-400" : ""} shrink-0 whitespace-nowrap pr-0.5`}>{children}</span>
);

const QuoteBar = () => (
  <div className="flex gap-[3px] pl-[3px] text-xs leading-[17px]">
    <div className="flex h-[19px] w-[749px] border border-gray-500 bg-[#f0f0f0]">
      <Cell w="w-[61px]">5,810</Cell>
      <Cell w="w-[62px]">0</Cell>
      <Cell w="w-[49px]" line>0%</Cell>
      <Cell w="w-[70px]">2,032,384</Cell>
      <Cell w="w-[59px]" color="text-[#1850c8]">39.77%</Cell>
      <Cell w="w-[42px]" line>20.75%</Cell>
      <Cell w="w-[81px]" line>12,409백만</Cell>
      <Cell w="w-[38px]">최우선</Cell>
      <Cell w="w-[45px]">5,810</Cell>
      <Cell w="w-[50px]" color="text-[#1850c8]">5,800</Cell>
      <Cell w="w-[8px]" line>{""}</Cell>
      <Cell w="w-[13px]">시</Cell>
      <Cell w="w-[40px]" color="text-[#e8190c]">5,820</Cell>
      <Cell w="w-[21px]">고</Cell>
      <Cell w="w-[41px]" color="text-[#e8190c]">6,310</Cell>
      <Cell w="w-[20px]">저</Cell>
      <Cell w="w-[41px]" color="text-[#1850c8]">5,720</Cell>
    </div>
    <button className="h-[19px] w-[39px] border border-gray-500 bg-[#f6cccc]">매수</button>
    <button className="h-[19px] w-[40px] border border-gray-500 bg-[#c6def4]">매도</button>
  </div>
);

const WIN_ICONS: [string, string][] = [
  ["창 분리", "M5 1h8v7H5zM1 6h8v7H1z"],
  ["축소", "M2 10h11v3H2z"],
  ["복제", "M4 1h9v8H4zM1 5v8h9"],
];

const TitleBar = () => (
  <header className="flex h-6 items-center bg-[#3a5691] pl-0.5 pr-1 text-white">
    <span className="mr-1 flex size-[15px] items-center justify-center rounded-[3px] border border-white text-[11px] font-bold">1</span>
    <h1 className="whitespace-nowrap font-['Noto_Sans','Noto_Sans_CJK_KR',sans-serif] text-[13px] leading-6">
      [0601] 주식종합차트 - 유통비율[64.5] 거래대금[12,409(백만)] 시가총액[569(억)] 주식수[9,797(천)] 유통수[6,319(천)] EPS[82] PBR[0.43] 배당수익률[0.5] PER[71.27] ROA[0.5] 유보율[2,620.9] 부채비율[25.8] 영업이익률[-3.1] 외국인보유[40(천)]
    </h1>
    <div className="ml-auto flex items-center gap-[5px]">
      {WIN_ICONS.map(([label, d]) => (
        <button key={label} aria-label={label}>
          <svg viewBox="0 0 15 15" className="size-[15px]" fill="none" stroke="#aebbd8" strokeWidth={1.500}><path d={d} /></svg>
        </button>
      ))}
      <button aria-label="고정"><svg viewBox="0 0 12 15" className="h-[15px] w-3" fill="#c8d2e6"><path d="M3 1h6v6l2 2H1l2-2zM5.500 9h1v5h-1z" /></svg></button>
      <button aria-label="글꼴" className="w-[11px] text-[15px] leading-4 text-[#c8d2e6]">T</button>
      <button aria-label="도움말" className="w-[11px] text-[15px] leading-4 text-[#c8d2e6]">?</button>
      <span className="ml-1 h-3 w-px bg-[#8090b0]" />
      <button aria-label="최소화"><svg viewBox="0 0 12 12" className="size-3" stroke="#c8d2e6" strokeWidth={2}><path d="M1 10h10" /></svg></button>
      <button aria-label="이전 크기"><svg viewBox="0 0 12 12" className="size-3" fill="none" stroke="#c8d2e6" strokeWidth={1.500}><path d="M4 1h7v6H4zM1 5h7v6H1z" /></svg></button>
      <button aria-label="닫기"><svg viewBox="0 0 12 12" className="size-3" stroke="#c8d2e6" strokeWidth={1.500}><path d="M2 2l8 8M10 2l-8 8" /></svg></button>
    </div>
  </header>
);

/* ---------- bottom bar ---------- */

const PLAY: [string, string][] = [
  ["재생", "M5 3l6 5-6 5z"],
  ["빠르게 뒤로", "M8 3v10L2 8zM14 3v10L8 8z"],
  ["정지", "M4 4h8v8H4z"],
  ["빠르게 앞으로", "M2 3v10l6-5zM8 3v10l6-5z"],
];

const TOOLS: [string, string][] = [
  ["창 추가", "M1 1h11v10H1zM8 8h7v7H8zM8 11.500h7M11.500 8v7"],
  ["창 겹치기", "M1 1h10v8H1zM5 6h10v9H5z"],
  ["영역 표시", "M1 2h14M1 14h14M1 10l4-4 3 3 5-5M13 4v8"],
  ["커서", "M1 3h14M5 3v12M7 6l6 6M7 6v5M7 6h5"],
  ["지우기 선", "M1 3h14M1 11l5-6 3 5 6-2"],
  ["수직선", "M4 1v14M1 12l3-5 3-4 3 8 5-3"],
  ["추세선", "M1 12L13 1M2 14l5-8 3 6 5-3"],
  ["지우개", "M2 9l6-7 6 2-6 7zM2 9v4l6 1v-3M10 15v-4M12.500 15v-4M15 15v-4"],
  ["차트 복사", "M5 1h10v9H5zM1 6h10v9H1zM2 12l3-3 2 2 3-3"],
  ["돋보기", "M10 10l5 5M11 6.500a4.500 4.500 0 1 1-9 0a4.500 4.500 0 1 1 9 0"],
  ["축소 보기", "M2 8h12"],
  ["확대 보기", "M2 8h12M8 2v12"],
];

const BottomBar = () => (
  <footer className="flex h-[18px] items-center bg-[#f0f0f0] text-xs">
    <button aria-label="왼쪽으로" className="flex h-full w-4 items-center justify-center border border-gray-400 bg-[#f0f0f0]">
      <svg viewBox="0 0 8 8" className="size-2"><path d="M6 0v8L2 4z" /></svg>
    </button>
    <div className="flex h-full flex-1 bg-[#f8f8f8]">
      <div className="h-full w-[34%]" />
      <div className="h-full flex-1 border border-b-2 border-white border-b-gray-500 border-r-gray-500 bg-[#efefef]" />
    </div>
    <div className="flex h-full">
      {PLAY.map(([label, d]) => (
        <button key={label} aria-label={label} className="flex h-full w-[17px] items-center justify-center border border-gray-400 bg-[#f2f2f2]">
          <svg viewBox="0 0 16 16" className="size-[13px]" fill="#000"><path d={d} /></svg>
        </button>
      ))}
    </div>
    <div className="mx-0.5 flex w-[75px] flex-col items-center justify-center gap-1">
      <input type="range" aria-label="재생 속도" defaultValue={67} className="h-1 w-[69px] appearance-none bg-gray-400 [&::-webkit-slider-thumb]:h-[11px] [&::-webkit-slider-thumb]:w-[4px] [&::-webkit-slider-thumb]:appearance-none [&::-webkit-slider-thumb]:border [&::-webkit-slider-thumb]:border-gray-500 [&::-webkit-slider-thumb]:bg-white" />
      <div className="flex w-[67px] justify-between">
        {Array.from({ length: 10 }, (_, i) => <span key={i} className="h-[3px] w-px bg-black" />)}
      </div>
    </div>
    <div className="flex h-full w-[221px] items-center">
      {TOOLS.map(([label, d], i) => (
        <button key={label} aria-label={label} className={i === 3 ? "flex h-full w-[17px] items-center justify-center bg-white" : "flex h-full w-[17px] items-center justify-center"}>
          <svg viewBox="0 0 16 16" className="size-[14px]" fill="none" stroke="#666" strokeWidth={i > 9 ? 2.500 : 1.300}><path d={d} /></svg>
        </button>
      ))}
      <button className="w-[17px] font-bold text-[#555]">A</button>
    </div>
  </footer>
);

/* ---------- overlays ---------- */

const LEGEND_SUB: [string, string, string, string][] = [
  ["거래량: 7,05", "8", "text-[#208888]", "text-red-600"],
  ["단순 3: 2,44", "0", "text-[#ffff00]", "text-[#0000ff]"],
  ["54: 39", "0", "text-black", "text-red-600"],
  ["KVO: 26,58", "6", "text-[#009030]", "text-[#00c000]"],
];
const LEGEND_SIGNAL: [string, string][] = [
  ["Signal 60: -242,082", "text-[#993300]"],
  ["Signal 100: -241,111", "text-[#ff9900]"],
  ["Signal 150: -241,020", "text-[#00ffff]"],
  ["OBV: -241,020", "text-[#ff9900]"],
  ["Signal 24: -244,045", "text-[#0000ff]"],
];

export default function App() {
  return (
    <div className="min-h-screen bg-black pb-[3px] pt-px font-['Liberation_Sans','Noto_Sans_CJK_KR',sans-serif] text-xs text-black">
      <div className="ml-px">
        <TitleBar />
      </div>
      <div className="ml-[3px] mr-1 bg-[#d0d0d0] pt-[6px]">
        <Toolbar />
        <div className="h-1" />
        <QuoteBar />
        <div className="h-[3px]" />
        <main className="mx-[3px] border-l border-t border-gray-400 bg-white text-[11px]">
          <section className="flex">
            <LeftAxis />
            <div className="relative min-w-0 flex-1 overflow-hidden">
              <PriceChart />
              <div className="absolute left-[5px] top-[2px] flex items-center gap-0.5">
                <span className="size-[5px] border border-gray-500 bg-gray-200" />
                <span className="border border-gray-300 bg-[#f0f0f0] px-0.5 text-[13px] leading-[13px] text-[#333]">코위버 매물대 수(13)</span>
              </div>
              <span className="absolute left-[136px] top-[41px] text-xs leading-[14px] text-[#e80000]">최고 6,310 (-7,92%, 09:51)</span>
              <span className="absolute left-[112px] top-[757px] text-xs leading-[14px] text-[#0000c8]">최저 5,720 (1,57%, 09:18)</span>
              <div className="absolute right-[4px] top-[40px] text-right text-xs leading-[12px]">
                <div className="relative text-[#ff6600]">
                  (고가+저가+종가)/3 단순 8: 5,804
                  <span className="absolute right-0 top-0 whitespace-nowrap text-black">저가지수 24<span className="pl-[36px] text-[#0000ff]">1</span></span>
                </div>
                <div className="relative text-[#00c0ff]"><span className="text-[#c0c0c0]">20 </span>10: 5,801</div>
                <div className="relative text-black">100: 5,828<span className="absolute right-0.5 top-0">1990: 5,878</span></div>
                <div className="text-red-600"><span className="text-[#ffc000]">15 </span>5: 5,804</div>
                <div className="text-[#0000e0]"><span className="text-[#c8e2ff]">3</span>10: 5,801</div>
              </div>
              <div className="absolute right-[3px] top-[650px] whitespace-nowrap text-right text-xs leading-[12px]">
                <div className="text-[#00d000]">당일시가 5,820 (0,17%)</div>
                <div className="text-[#993300]">전일종가 5,810 (0,00%)</div>
              </div>
            </div>
            <RightAxis />
          </section>

          <section className="flex border-t border-gray-400">
            <div className="relative h-[157px] w-[42px] shrink-0 overflow-hidden border-r border-gray-400 text-[#444]">
              {LEFT_SUB.map(([y, t]) => (
                <span key={y} className="absolute right-[7px] -translate-y-1/2" style={{ top: y - 881 }}>{t}</span>
              ))}
              <svg viewBox="0 881 6 157" className="absolute right-0 top-0 h-[157px] w-[6px]" shapeRendering="crispEdges" stroke="#909090">
                {[894, 917, 941, 965, 989, 1012, 1036].map((y) => <line key={y} x1={0} x2={6} y1={y + 0.5} y2={y + 0.5} />)}
                {[906, 929, 953, 977, 1000, 1024].map((y) => <line key={y} x1={4} x2={6} y1={y + 0.5} y2={y + 0.5} />)}
              </svg>
            </div>
            <div className="relative min-w-0 flex-1">
              <SubChart />
              <div className="absolute right-[4px] top-[39px] text-right text-xs leading-[12px]">
                {LEGEND_SUB.map(([t, n, a, b]) => <div key={t} className={a}>{t}<span className={b}>{n}</span></div>)}
              </div>
              <div className="absolute right-[4px] top-[91px] text-right text-xs leading-[12px]">
                {LEGEND_SIGNAL.map(([t, c]) => <div key={t} className={c}>{t}</div>)}
              </div>
            </div>
            <div className="relative h-[157px] w-[47px] shrink-0 border-l border-r border-gray-400 text-[11px] text-[#444]">
              <button aria-label="지표 닫기" className="absolute right-[2px] top-[3px] flex size-[8px] items-center justify-center bg-[#333]">
                <svg viewBox="0 0 6 6" className="size-[6px]" stroke="#fff"><path d="M1 1l4 4M5 1l-4 4" /></svg>
              </button>
              {RIGHT_SUB.map(([y, t]) => <Label key={t} y={y} top={881} right>{t}</Label>)}
              <svg viewBox="0 881 6 157" className="absolute left-0 top-0 h-[157px] w-[6px]" shapeRendering="crispEdges" stroke="#909090">
                {[902, 924, 947, 969, 991, 1014, 1036].map((y) => <line key={y} x1={0} x2={6} y1={y + 0.5} y2={y + 0.5} />)}
                {[891, 913, 936, 958, 980, 1003, 1025].map((y) => <line key={y} x1={0} x2={2} y1={y + 0.5} y2={y + 0.5} />)}
              </svg>
            </div>
          </section>

          <section className="flex h-[19px] border-y border-gray-400 text-[#444]">
            <div className="w-[42px] shrink-0 border-r border-gray-400" />
            <div className="relative min-w-0 flex-1 overflow-hidden">
              {TIMES.map(([x, t], i) => (
                <span key={x} className={i === 0 ? "absolute top-0 h-full pl-px text-xs font-bold leading-[16px]" : "absolute top-0 h-full border-l border-gray-400 pl-px leading-[16px]"} style={{ left: `${((x - X0) / PLOT_W) * 100}%` }}>
                  {t}
                </span>
              ))}
              <span className="absolute top-0 h-full whitespace-nowrap border border-black bg-[#ffdd70] px-0.5 text-xs leading-[14px]" style={{ left: `${((1553 - X0) / PLOT_W) * 100}%` }}>
                2025/03/06(목) 13:52:00
              </span>
            </div>
            <div className="w-[47px] shrink-0 whitespace-nowrap border-l border-r border-gray-400 pl-2 text-[11px] leading-[16px]">15:30:0</div>
          </section>
          <BottomBar />
        </main>
        <div className="h-[2px] bg-[#e4e8e4]" />
      </div>
    </div>
  );
}
